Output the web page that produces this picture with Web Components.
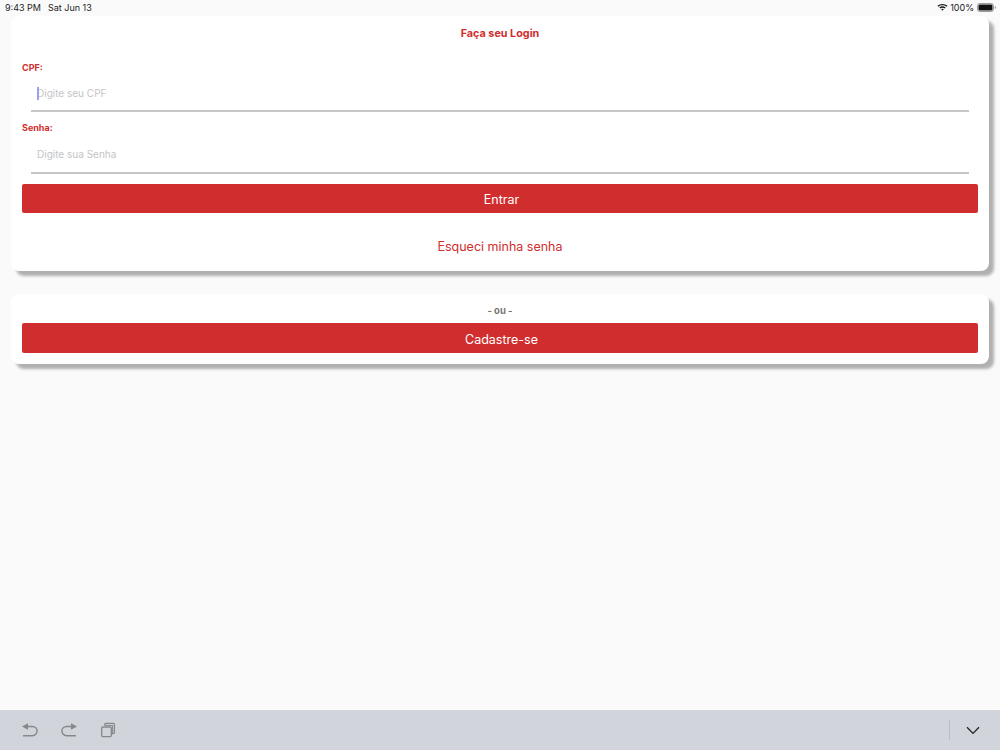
<!DOCTYPE html>
<html>
<head>
<meta charset="utf-8">
<title>Login</title>
<style>
html, body { margin: 0; height: 100%; background: #fafafa; }
body { font-family: Inter, "Liberation Sans", sans-serif; }
</style>
</head>
<body>
<login-app>
    <status-bar></status-bar>
    <main-area>
        <login-card style="height:255px">
            <card-title>Faça seu Login</card-title>
            <text-field style="height:60.5px" label="CPF:" placeholder="Digite seu CPF" focused></text-field>
            <text-field style="height:62px;--line-h:36px;--line-pad:1.5px" label="Senha:" placeholder="Digite sua Senha"></text-field>
            <red-button style="height:29.4px;--btn-pad:1.6px">Entrar</red-button>
            <link-text>Esqueci minha senha</link-text>
        </login-card>
        <login-card style="height:70px">
            <or-text>- ou -</or-text>
            <red-button style="--btn-pad:2px">Cadastre-se</red-button>
        </login-card>
    </main-area>
    <key-bar></key-bar>
</login-app>

<script>
function define(name, html, setup) {
    customElements.define(name, class extends HTMLElement {
        constructor() {
            super();
            this.attachShadow({mode: "open"});
            this.shadowRoot.innerHTML = html;
            if (setup) setup(this, this.shadowRoot);
        }
    });
}

define("login-app", `
    <style>
    :host { display: flex; flex-direction: column; height: 750px; width: 1000px; overflow: hidden; }
    </style>
    <slot></slot>
`);

define("status-bar", `
    <style>
    :host { display: flex; align-items: center; height: 14px; padding: 0 4px 0 5px; font-size: 9px; color: #1c1c1e; flex: none; }
    .date { margin-left: 7px; }
    .right { margin-left: auto; display: flex; align-items: center; }
    .wifi { margin-right: 2px; }
    .pct { margin-right: 3px; }
    </style>
    <span>9:43 PM</span><span class="date">Sat Jun 13</span>
    <div class="right">
        <svg class="wifi" width="11" height="8" viewBox="0 0 10 8" preserveAspectRatio="none">
            <path d="M0.3 2.7 A7 7 0 0 1 9.7 2.7 L8.7 3.8 A5.5 5.5 0 0 0 1.3 3.8 Z" fill="#1c1c1e"/>
            <path d="M2.1 4.5 A4.4 4.4 0 0 1 7.9 4.5 L6.9 5.6 A3 3 0 0 0 3.1 5.6 Z" fill="#1c1c1e"/>
            <path d="M3.8 6.3 A1.8 1.8 0 0 1 6.2 6.3 L5 7.7 Z" fill="#1c1c1e"/>
        </svg>
        <span class="pct">100%</span>
        <svg width="19" height="9" viewBox="0 0 19 9">
            <rect x="0.5" y="0.5" width="16" height="8" rx="2.2" fill="none" stroke="#9a9a9c"/>
            <rect x="1.5" y="1.5" width="14" height="6" rx="1.3" fill="#111"/>
            <path d="M17.8 3 Q19 3.4 19 4.5 Q19 5.6 17.8 6 Z" fill="#9a9a9c"/>
        </svg>
    </div>
`);

define("main-area", `
    <style>
    :host { display: flex; flex-direction: column; gap: 23px; flex: 1; padding: 2px 11px 0; }
    </style>
    <slot></slot>
`);

define("login-card", `
    <style>
    :host { display: flex; flex-direction: column; box-sizing: border-box; background: #fff; border-radius: 8px; box-shadow: 5px 5px 3px 0 #b0b0b0; padding: 0 11px; }
    </style>
    <slot></slot>
`);

define("card-title", `
    <style>
    :host { display: block; text-align: center; color: #d02e2e; font-size: 10.8px; font-weight: 700; line-height: 14px; padding-top: 11px; height: 34.5px; }
    </style>
    <slot></slot>
`);

define("text-field", `
    <style>
    :host { display: flex; flex-direction: column; height: 61.5px; }
    label { color: #d02e2e; font-size: 9px; font-weight: 700; line-height: 12px; height: 12px; }
    .line { position: relative; display: flex; align-items: center; margin: 0 9px; height: var(--line-h, 34px); padding: var(--line-pad, 2.5px) 6px 0; border-bottom: 2px solid #c6c6c6; }
    input { border: 0; outline: 0; padding: 0; background: transparent; width: 100%; font: inherit; font-size: 10px; color: #333; }
    input::placeholder { color: #c4c4c6; opacity: 1; }
    .caret { display: none; position: absolute; left: 6px; top: 13.5px; width: 1.5px; height: 13px; background: #9aa0ee; }
    :host([focused]) .caret { display: block; }
    </style>
    <label></label>
    <div class="line"><input><span class="caret"></span></div>
`, (el, root) => {
    root.querySelector("label").textContent = el.getAttribute("label");
    root.querySelector("input").placeholder = el.getAttribute("placeholder");
});

define("red-button", `
    <style>
    :host { display: flex; align-items: center; justify-content: center; flex: none; height: 30px; background: #d02e2e; border-radius: 2px; color: #fff; font-size: 12.5px; padding: var(--btn-pad, 1px) 0 0 3px; box-sizing: border-box; }
    </style>
    <slot></slot>
`);

define("link-text", `
    <style>
    :host { display: block; text-align: center; color: #d02e2e; font-size: 12.5px; line-height: 16px; margin-top: 25.4px; }
    </style>
    <slot></slot>
`);

define("or-text", `
    <style>
    :host { display: block; text-align: center; color: #757575; font-size: 9.5px; font-weight: 700; line-height: 12px; padding-top: 11px; height: 18px; }
    </style>
    <slot></slot>
`);

define("key-bar", `
    <style>
    :host { display: flex; align-items: center; flex: none; height: 40px; background: #d1d5db; padding: 0 0 0 21px; box-sizing: border-box; gap: 21px; }
    svg { display: block; flex: none; }
    .copy { margin-left: 1px; }
    .sep { width: 1px; height: 20px; background: #b9bcc2; margin-left: auto; }
    .down { margin: 0 20px 0 -5px; }
    </style>
    <svg width="18" height="16" viewBox="0 0 18 16" fill="none" stroke="#85888c" stroke-width="1.4">
        <path d="M5 4.5 H11.5 A4.6 4.6 0 0 1 11.5 13.7 H2"/><path d="M7 1.2 L1 4.5 L7 7.8 Z" fill="#85888c" stroke="none"/>
    </svg>
    <svg width="18" height="16" viewBox="0 0 18 16" fill="none" stroke="#85888c" stroke-width="1.4">
        <path d="M13 4.5 H6.5 A4.6 4.6 0 0 0 6.5 13.7 H16"/><path d="M11 1.2 L17 4.5 L11 7.8 Z" fill="#85888c" stroke="none"/>
    </svg>
    <svg class="copy" width="16" height="16" viewBox="0 0 16 16" fill="none" stroke="#85888c" stroke-width="1.3">
        <rect x="1.7" y="5" width="9.6" height="9.6" rx="1"/><path d="M4.7 3.6 V2.4 A1 1 0 0 1 5.7 1.4 H13.4 A1 1 0 0 1 14.4 2.4 V10.6 A1 1 0 0 1 13.4 11.6 H11.6"/><path d="M5 3.4 H12.6 V11" stroke-width="1"/>
    </svg>
    <span class="sep"></span>
    <svg class="down" width="14" height="9" viewBox="0 0 14 9" fill="none" stroke="#222" stroke-width="1.3">
        <path d="M1 1.2 L7 7.4 L13 1.2"/>
    </svg>
`);
</script>
</body>
</html>
